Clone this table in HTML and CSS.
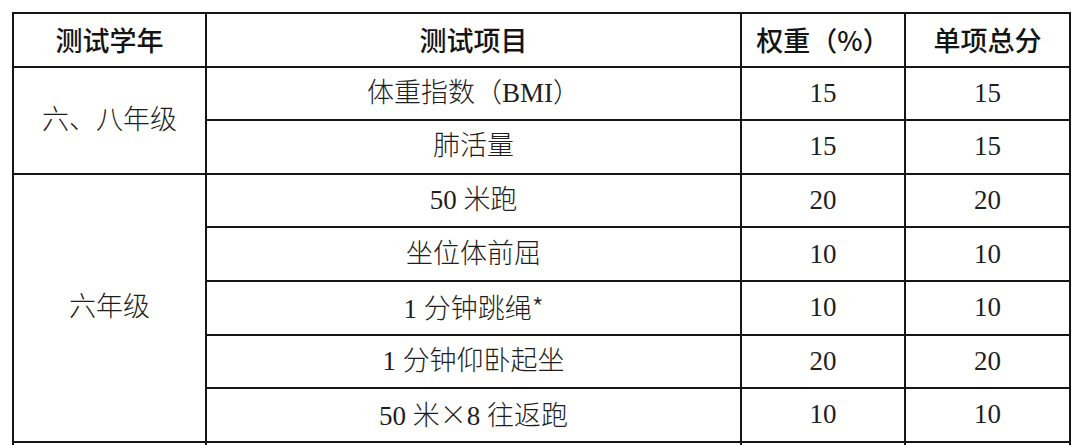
FILE: index.html
```html
<!DOCTYPE html>
<html lang="zh-CN">
<head>
<meta charset="utf-8">
<title>测试项目</title>
<link rel="stylesheet" href="styles.css">
</head>
<body>
<table class="score-table">
  <colgroup>
    <col class="c-year">
    <col class="c-item">
    <col class="c-weight">
    <col class="c-total">
  </colgroup>
  <thead>
    <tr>
      <th>测试学年</th>
      <th>测试项目</th>
      <th>权重（%）</th>
      <th>单项总分</th>
    </tr>
  </thead>
  <tbody>
    <tr>
      <td rowspan="2">六、八年级</td>
      <td>体重指数（BMI）</td>
      <td>15</td>
      <td>15</td>
    </tr>
    <tr>
      <td>肺活量</td>
      <td>15</td>
      <td>15</td>
    </tr>
    <tr>
      <td rowspan="5">六年级</td>
      <td>50 米跑</td>
      <td>20</td>
      <td>20</td>
    </tr>
    <tr>
      <td>坐位体前屈</td>
      <td>10</td>
      <td>10</td>
    </tr>
    <tr>
      <td>1 分钟跳绳<span class="cjk">*</span></td>
      <td>10</td>
      <td>10</td>
    </tr>
    <tr>
      <td>1 分钟仰卧起坐</td>
      <td>20</td>
      <td>20</td>
    </tr>
    <tr>
      <td>50 米<span class="cjk">×</span>8 往返跑</td>
      <td>10</td>
      <td>10</td>
    </tr>
    <tr class="next-row">
      <td></td>
      <td></td>
      <td></td>
      <td></td>
    </tr>
  </tbody>
</table>
</body>
</html>
```

FILE: styles.css
```css
html, body {
  margin: 0;
  padding: 0;
  background: #ffffff;
  overflow: hidden;
}

body {
  padding: 12px 0 0 12px;
  color: #1a1a1a;
}

.score-table {
  border-collapse: collapse;
  table-layout: fixed;
  width: 1057px;
}

.c-year { width: 193px; }
.c-item { width: 535px; }
.c-weight { width: 164px; }
.c-total { width: 165px; }

.score-table th,
.score-table td {
  border: 2px solid #161616;
  padding: 0;
  height: 51.6px;
  text-align: center;
  vertical-align: middle;
  line-height: 1;
}

.score-table th {
  font-family: "Noto Sans CJK SC", sans-serif;
  font-weight: 500;
  font-size: 27px;
  color: #141414;
}

.score-table td {
  font-family: "Liberation Serif", "Noto Sans CJK SC", serif;
  font-weight: 300;
  font-size: 27px;
  color: #1e1e1e;
}

.score-table .cjk {
  font-family: "Noto Sans CJK SC", sans-serif;
  font-weight: 300;
}

.score-table tr.next-row td {
  height: 40px;
}
```
